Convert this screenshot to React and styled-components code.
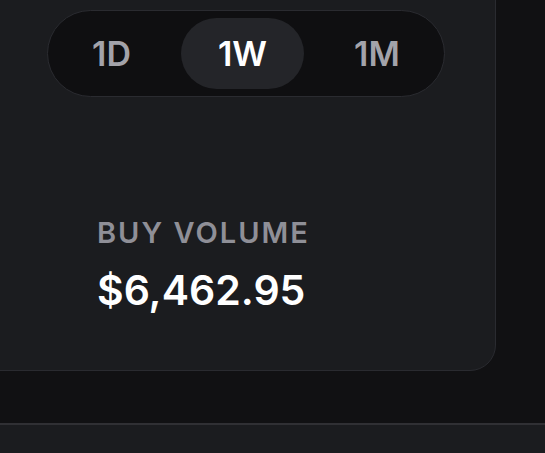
import React, { useState } from "react";
import styled, { createGlobalStyle } from "styled-components";

const GlobalStyle = createGlobalStyle`
  html, body {
    margin: 0;
    padding: 0;
    background: #111113;
    overflow: hidden;
  }
  * {
    box-sizing: border-box;
  }
`;

const Page = styled.div`
  width: 545px;
  height: 453px;
  display: flex;
  flex-direction: column;
  font-family: Inter, "Noto Sans", sans-serif;
  overflow: hidden;
`;

const Card = styled.section`
  margin: -30px 0 0 -30px;
  width: 526px;
  height: 401px;
  flex-shrink: 0;
  padding: 39px 0 0 76px;
  background: #1b1c1f;
  border: 1px solid #2a2b30;
  border-radius: 26px;
  display: flex;
  flex-direction: column;
`;

const Segmented = styled.div`
  width: 398px;
  height: 87px;
  padding: 7px;
  display: flex;
  gap: 13px;
  background: #0f0f11;
  border: 1px solid #2a2b30;
  border-radius: 999px;
`;

const Segment = styled.button`
  height: 100%;
  padding: 0 37px;
  border: none;
  border-radius: 999px;
  background: ${(p) => (p.$active ? "#242529" : "transparent")};
  color: ${(p) => (p.$active ? "#ffffff" : "#a3a3aa")};
  font-family: inherit;
  font-size: 34px;
  font-weight: 600;
  letter-spacing: 0;
  cursor: pointer;
`;

const Stat = styled.div`
  margin: 120px 0 0 50px;
  display: flex;
  flex-direction: column;
  gap: 17px;
`;

const Label = styled.span`
  color: #8f8f97;
  font-size: 29px;
  font-weight: 600;
  letter-spacing: 2px;
  line-height: 32px;
`;

const Value = styled.span`
  color: #ffffff;
  font-size: 41px;
  font-weight: 600;
  line-height: 48px;
`;

const LowerPanel = styled.div`
  margin-top: 52px;
  flex: 1;
  background: #1b1c1f;
  border-top: 2px solid #303034;
`;

const ranges = ["1D", "1W", "1M"];

export default function App() {
  const [range, setRange] = useState("1W");
  return (
    <Page>
      <GlobalStyle />
      <Card>
        <Segmented>
          {ranges.map((r) => (
            <Segment key={r} $active={r === range} onClick={() => setRange(r)}>
              {r}
            </Segment>
          ))}
        </Segmented>
        <Stat>
          <Label>BUY VOLUME</Label>
          <Value>$6,462.95</Value>
        </Stat>
      </Card>
      <LowerPanel />
    </Page>
  );
}
